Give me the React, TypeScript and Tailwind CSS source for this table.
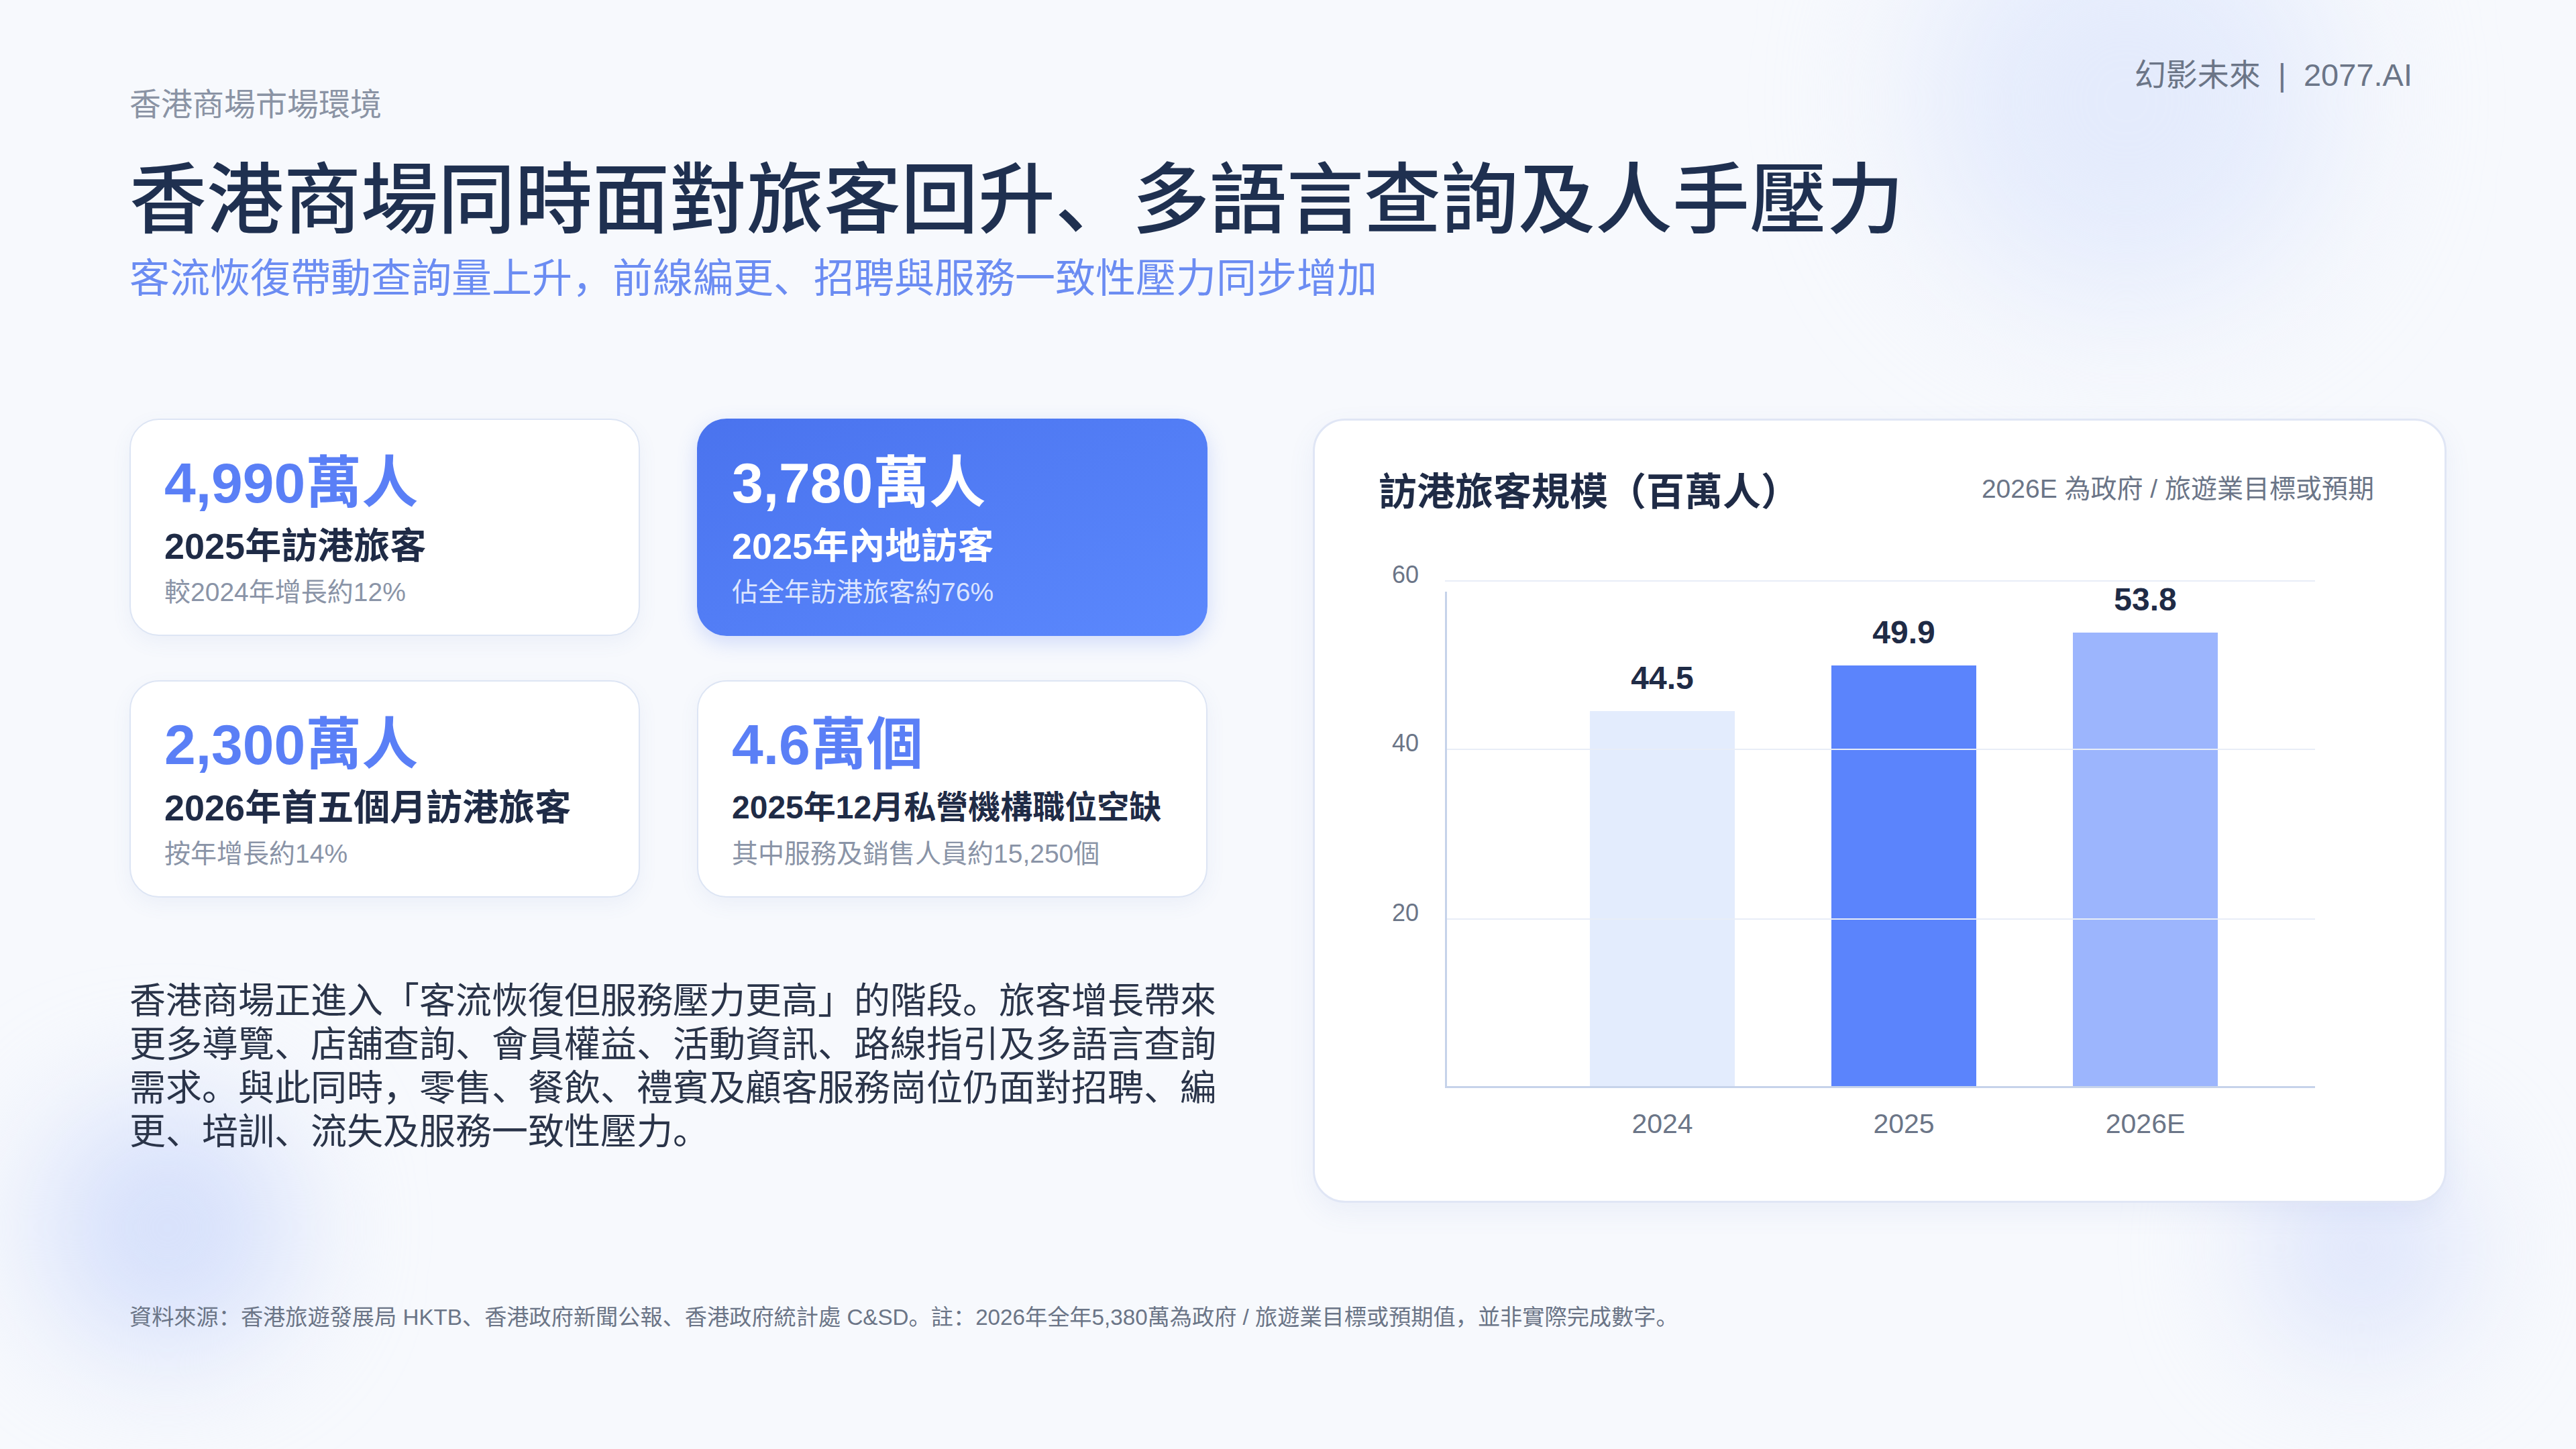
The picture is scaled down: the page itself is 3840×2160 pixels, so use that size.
import React from "react";

const FONT = "font-['Liberation_Sans','Noto_Sans_CJK_SC',sans-serif]";

const stats = [
  { value: "4,990萬人", label: "2025年訪港旅客", note: "較2024年增長約12%", highlight: false },
  { value: "3,780萬人", label: "2025年內地訪客", note: "佔全年訪港旅客約76%", highlight: true },
  { value: "2,300萬人", label: "2026年首五個月訪港旅客", note: "按年增長約14%", highlight: false },
  { value: "4.6萬個", label: "2025年12月私營機構職位空缺", note: "其中服務及銷售人員約15,250個", highlight: false, small: true },
];

const bars = [
  { year: "2024", value: 44.5, color: "bg-[#e3ecfd]" },
  { year: "2025", value: 49.9, color: "bg-[#5b84fc]" },
  { year: "2026E", value: 53.8, color: "bg-[#9cb5fd]" },
];

const UNIT = 755 / 60;

function StatCard({ stat }: { stat: (typeof stats)[number] }) {
  const hi = stat.highlight;
  return (
    <div
      className={
        hi
          ? "h-[324px] rounded-[44px] bg-gradient-to-br from-[#4a73ee] to-[#5b88fd] pl-[52px] pt-[54px] shadow-[0_10px_30px_rgba(74,115,238,0.22)]"
          : "h-[324px] rounded-[44px] border-[2px] border-[#dde5f4] bg-white pl-[50px] pt-[52px] shadow-[0_10px_30px_rgba(90,120,190,0.07)]"
      }
    >
      <div className={`text-[84px] font-bold leading-none ${hi ? "text-white" : "text-[#5a7ff6]"}`}>
        {stat.value}
      </div>
      <div
        className={`font-bold leading-none ${stat.small ? "mt-[28px] text-[48px]" : "mt-[25px] text-[54px]"} ${
          hi ? "text-white" : "text-[#1f2b46]"
        }`}
      >
        {stat.label}
      </div>
      <div className={`text-[39px] leading-none ${stat.small ? "mt-[25px]" : "mt-[22px]"} ${hi ? "text-[#dce5fe]" : "text-[#8a94a7]"}`}>
        {stat.note}
      </div>
    </div>
  );
}

function Chart() {
  return (
    <div className="h-[1169px] w-[1690px] rounded-[48px] border-[3px] border-[#e0e6f5] bg-white pl-[95px] pr-[105px] pt-[78px] shadow-[0_14px_40px_rgba(90,120,190,0.08)]">
      <div className="flex items-start justify-between">
        <div className="text-[57px] font-bold leading-none text-[#1f2b46]">訪港旅客規模（百萬人）</div>
        <div className="mt-[4px] text-[39px] leading-none text-[#6b7587]">2026E 為政府 / 旅遊業目標或預期</div>
      </div>

      <div className="mt-[103px] flex">
        <div className="relative h-[755px] w-[60px] text-right text-[36px] leading-none text-[#6b7587]">
          <div className="absolute right-0 top-[-26px]">60</div>
          <div className="absolute right-0 top-[225px]">40</div>
          <div className="absolute right-0 top-[478px]">20</div>
        </div>

        <div className="ml-[39px] w-[1297px]">
          <div className="relative h-[755px]">
            <div className="flex h-full items-end gap-[144px] pl-[216px]">
              {bars.map((b) => (
                <div key={b.year} className="flex w-[216px] flex-col items-center">
                  <div className="mb-[25px] text-[48px] font-bold leading-none text-[#1f2b46]">{b.value}</div>
                  <div className={`w-full ${b.color}`} style={{ height: b.value * UNIT }} />
                </div>
              ))}
            </div>
            <div className="absolute left-0 right-0 top-0 h-[2px] bg-[#e8edf7]" />
            <div className="absolute left-0 right-0 top-[251px] h-[2px] bg-[#e8edf7]" />
            <div className="absolute left-0 right-0 top-[504px] h-[2px] bg-[#e8edf7]" />
            <div className="absolute bottom-0 left-0 top-[17px] w-[3px] bg-[#c6d3ea]" />
            <div className="absolute bottom-[-2px] left-0 right-0 h-[3px] bg-[#c6d3ea]" />
          </div>
          <div className="mt-[35px] flex gap-[144px] pl-[216px] text-[41px] leading-none text-[#6b7587]">
            {bars.map((b) => (
              <div key={b.year} className="w-[216px] text-center">
                {b.year}
              </div>
            ))}
          </div>
        </div>
      </div>
    </div>
  );
}

export default function App() {
  return (
    <div className={`relative h-[2160px] w-[3840px] overflow-hidden bg-[#f7f9fd] ${FONT}`}>
      {/* soft background glows */}
      <div className="absolute left-[2860px] top-[-160px] h-[620px] w-[620px] rounded-full bg-[#e4ebfc] blur-[110px]" />
      <div className="absolute left-[60px] top-[1640px] h-[380px] w-[380px] rounded-full bg-[#d6e0fb] blur-[90px]" />
      <div className="absolute left-[3360px] top-[1700px] h-[320px] w-[320px] rounded-full bg-[#dfe6fb] blur-[90px]" />

      <div className="relative px-[193px] pt-[88px]">
        <div className="flex items-start justify-between">
          <div className="pt-[44px]">
            <div className="text-[47px] leading-none text-[#8a93a4]">香港商場市場環境</div>
            <h1 className="mt-[62px] text-[115px] font-medium leading-none text-[#1f3050]">
              香港商場同時面對旅客回升、多語言查詢及人手壓力
            </h1>
            <div className="mt-[30px] text-[60px] leading-none text-[#6b8cf2]">
              客流恢復帶動查詢量上升，前線編更、招聘與服務一致性壓力同步增加
            </div>
          </div>
          <div className="mr-[51px] flex items-center gap-[26px] text-[47px] leading-none text-[#6b7587]">
            <span>幻影未來</span>
            <span>|</span>
            <span>2077.AI</span>
          </div>
        </div>

        <div className="mt-[178px] flex items-start justify-between">
          <div className="w-[1607px]">
            <div className="grid grid-cols-2 gap-x-[85px] gap-y-[66px]">
              {stats.map((s) => (
                <StatCard key={s.value} stat={s} />
              ))}
            </div>
            <p className="mt-[122px] w-[1625px] text-[54px] leading-[65px] text-[#2a3449]">
              香港商場正進入「客流恢復但服務壓力更高」的階段。旅客增長帶來更多導覽、店舖查詢、會員權益、活動資訊、路線指引及多語言查詢需求。與此同時，零售、餐飲、禮賓及顧客服務崗位仍面對招聘、編更、培訓、流失及服務一致性壓力。
            </p>
          </div>
          <Chart />
        </div>

        <div className="mt-[154px] text-[33.2px] leading-none text-[#6b7587]">
          資料來源：香港旅遊發展局 HKTB、香港政府新聞公報、香港政府統計處 C&amp;SD。註：2026年全年5,380萬為政府 / 旅遊業目標或預期值，並非實際完成數字。
        </div>
      </div>
    </div>
  );
}
